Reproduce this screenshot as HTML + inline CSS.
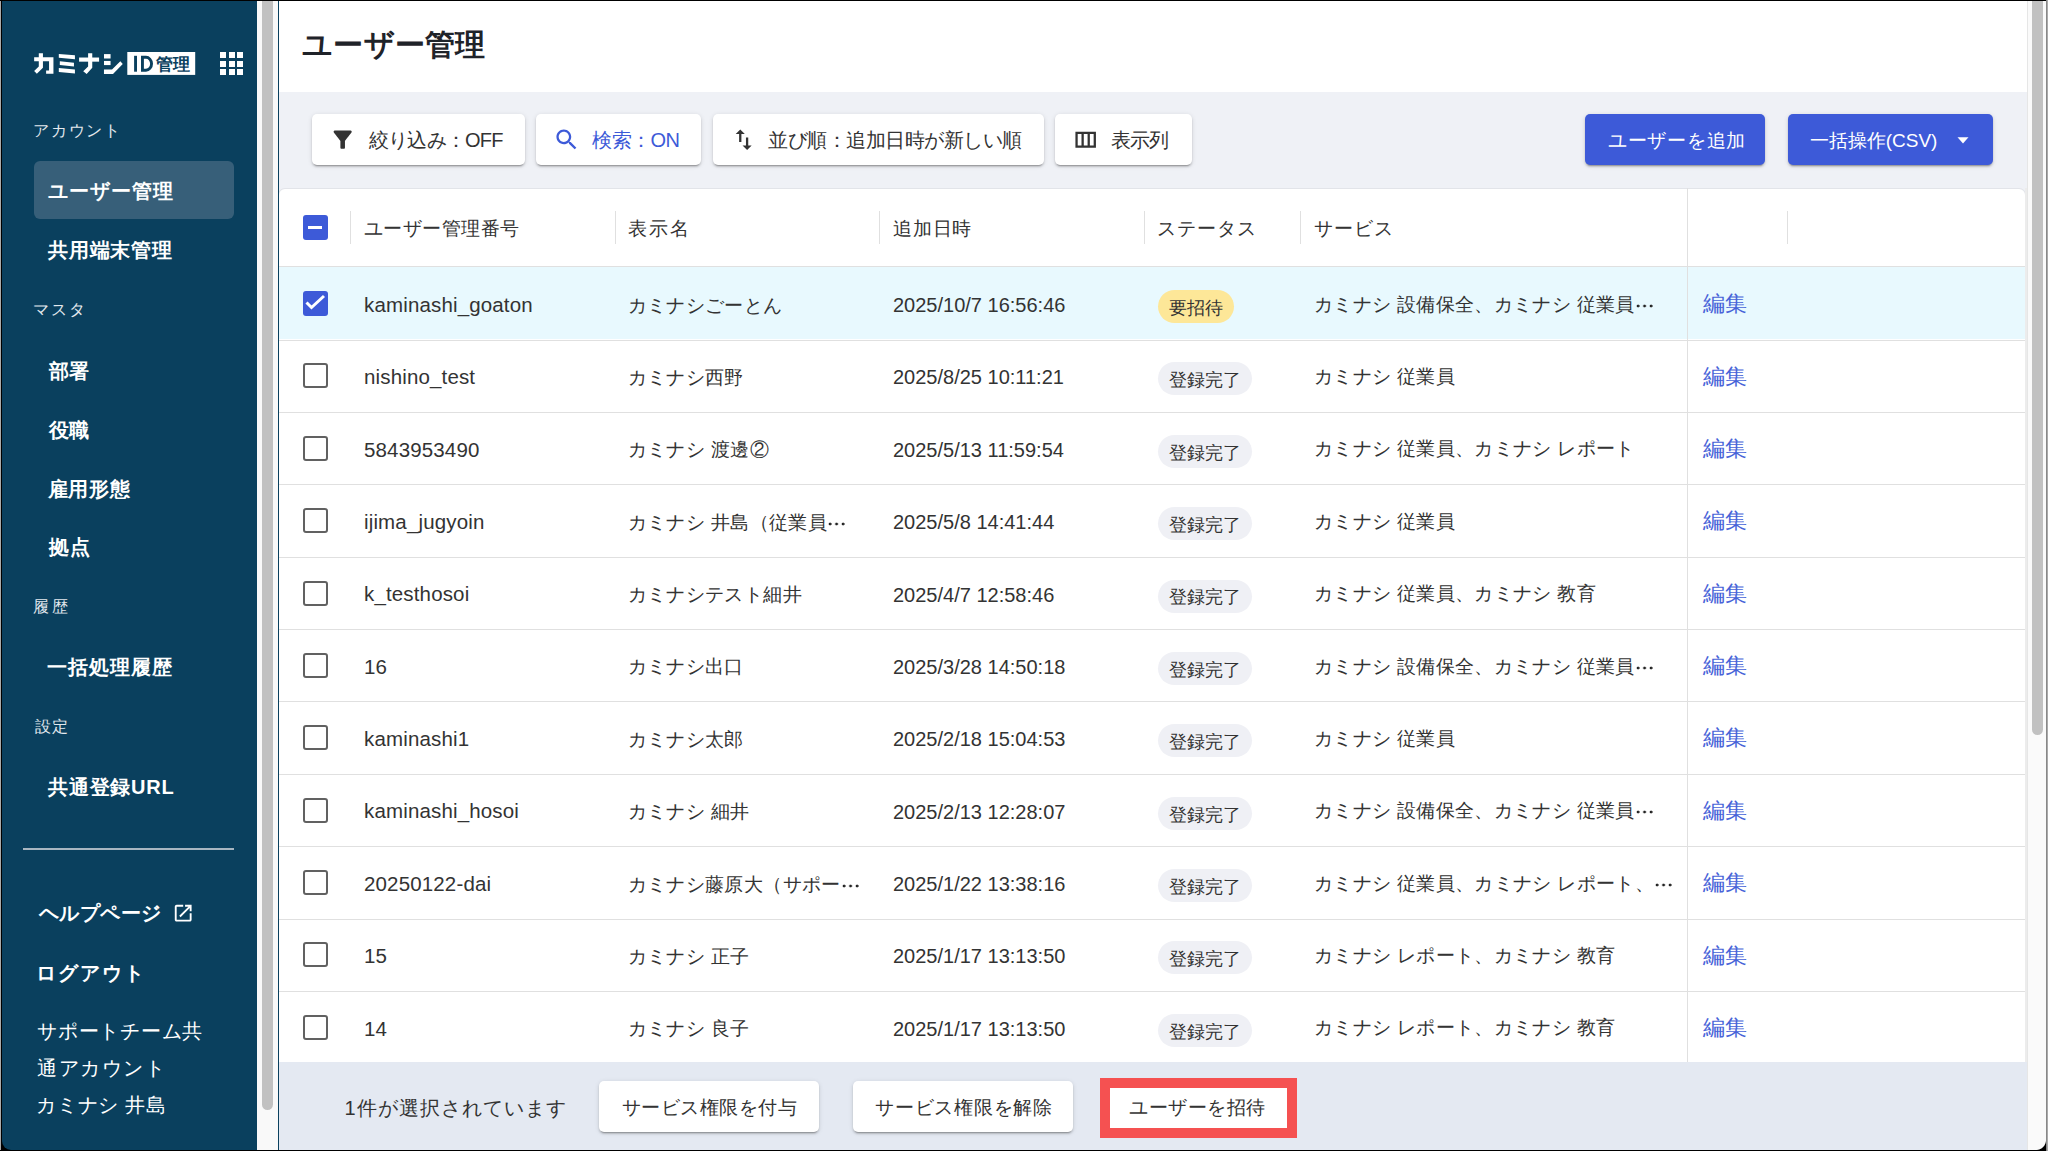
<!DOCTYPE html>
<html lang="ja"><head><meta charset="utf-8"><title>ユーザー管理</title>
<style>
html,body{margin:0;padding:0;width:2048px;height:1151px;overflow:hidden;background:#000}
body{position:relative;font-family:'Liberation Sans', sans-serif}
.t{position:absolute;white-space:nowrap}
</style></head><body>
<div id="side" style="position:absolute;left:2px;top:1px;width:255px;height:1149px;background:#0a405e;border-bottom-left-radius:9px"></div>
<svg style="position:absolute;left:0;top:0" width="260" height="90" viewBox="0 0 260 90"><g fill="#fff"><path d="M34.15 57.28H53.44V73.63H46.11V70.46H49.04V61.18H34.15Z"/><path d="M38.79 53.13H42.94V67.78L36.84 73.63L34.15 70.95L38.79 66.55Z"/><path d="M58.81 54.10L74.92 55.32V59.23L58.81 57.77Z"/><path d="M59.79 61.18L73.95 62.65V66.55L59.79 65.09Z"/><path d="M58.81 68.02L74.92 69.48V73.39L58.81 71.93Z"/><path d="M79.07 57.52H99.09V61.67H79.07Z"/><path d="M88.11 53.13H92.26V67.78L86.64 73.88L83.22 71.19L88.11 66.55Z"/><path d="M103.97 54.10H110.57V58.50H103.97Z"/><path d="M103.97 60.94H110.57V65.09H103.97Z"/><path d="M103.97 69.48H112.03L120.33 61.18L122.77 64.11L113.01 73.88H103.97Z"/><rect x="127.3" y="52" width="67.9" height="22.9"/></g><g fill="#0a405e"><rect x="134.1" y="55.8" width="2.9" height="15.9"/><path fill-rule="evenodd" d="M141 55.8H146A7 7.95 0 0 1 146 71.7H141Z M143.9 58.7H146A4.1 5.05 0 0 1 146 68.8H143.9Z"/></g></svg>
<div class="t" style="left:156px;top:56.70px;font-size:16.6px;line-height:16.6px;font-weight:700;color:#0a405e;">管理</div>
<div style="position:absolute;left:220.0px;top:52.0px;width:6px;height:6px;background:#fff"></div>
<div style="position:absolute;left:228.6px;top:52.0px;width:6px;height:6px;background:#fff"></div>
<div style="position:absolute;left:237.2px;top:52.0px;width:6px;height:6px;background:#fff"></div>
<div style="position:absolute;left:220.0px;top:60.6px;width:6px;height:6px;background:#fff"></div>
<div style="position:absolute;left:228.6px;top:60.6px;width:6px;height:6px;background:#fff"></div>
<div style="position:absolute;left:237.2px;top:60.6px;width:6px;height:6px;background:#fff"></div>
<div style="position:absolute;left:220.0px;top:69.2px;width:6px;height:6px;background:#fff"></div>
<div style="position:absolute;left:228.6px;top:69.2px;width:6px;height:6px;background:#fff"></div>
<div style="position:absolute;left:237.2px;top:69.2px;width:6px;height:6px;background:#fff"></div>
<div style="position:absolute;left:34px;top:161px;width:200px;height:58px;border-radius:6px;background:#375f79"></div>
<div class="t" style="left:33.00px;top:123.00px;font-size:16px;letter-spacing:1.75px;line-height:16px;font-weight:400;color:#e3e9ee;">アカウント</div>
<div class="t" style="left:33.30px;top:302.00px;font-size:16px;letter-spacing:1.75px;line-height:16px;font-weight:400;color:#e3e9ee;">マスタ</div>
<div class="t" style="left:33.00px;top:598.50px;font-size:16px;letter-spacing:2.75px;line-height:16px;font-weight:400;color:#e3e9ee;">履歴</div>
<div class="t" style="left:34.50px;top:718.50px;font-size:16px;letter-spacing:1.0px;line-height:16px;font-weight:400;color:#e3e9ee;">設定</div>
<div class="t" style="left:48.00px;top:181.00px;font-size:20px;letter-spacing:1.0px;line-height:20px;font-weight:700;color:#fff;">ユーザー管理</div>
<div class="t" style="left:48.00px;top:240.00px;font-size:20px;letter-spacing:0.75px;line-height:20px;font-weight:700;color:#fff;">共用端末管理</div>
<div class="t" style="left:48.60px;top:361.00px;font-size:20px;letter-spacing:0.0px;line-height:20px;font-weight:700;color:#fff;">部署</div>
<div class="t" style="left:48.60px;top:419.50px;font-size:20px;letter-spacing:0.0px;line-height:20px;font-weight:700;color:#fff;">役職</div>
<div class="t" style="left:47.60px;top:479.00px;font-size:20px;letter-spacing:0.75px;line-height:20px;font-weight:700;color:#fff;">雇用形態</div>
<div class="t" style="left:48.60px;top:537.00px;font-size:20px;letter-spacing:1.0px;line-height:20px;font-weight:700;color:#fff;">拠点</div>
<div class="t" style="left:47.30px;top:656.70px;font-size:20px;letter-spacing:1.0px;line-height:20px;font-weight:700;color:#fff;">一括処理履歴</div>
<div class="t" style="left:48.00px;top:777.00px;font-size:20px;letter-spacing:0.75px;line-height:20px;font-weight:700;color:#fff;">共通登録URL</div>
<div style="position:absolute;left:23px;top:848px;width:211px;height:2px;background:#a8b6c1"></div>
<div class="t" style="left:38.50px;top:903.00px;font-size:20px;letter-spacing:0.5px;line-height:20px;font-weight:700;color:#fff;">ヘルプページ</div>
<svg style="position:absolute;left:172.4px;top:901.8px" width="22.4" height="22.4" viewBox="0 0 24 24"><path fill="#fff" d="M19 19H5V5h7V3H5c-1.11 0-2 .9-2 2v14c0 1.1.89 2 2 2h14c1.1 0 2-.9 2-2v-7h-2v7zM14 3v2h3.59l-9.83 9.83 1.41 1.41L19 6.41V10h2V3h-7z"/></svg>
<div class="t" style="left:35.50px;top:963.00px;font-size:20px;letter-spacing:2.0px;line-height:20px;font-weight:700;color:#fff;">ログアウト</div>
<div class="t" style="left:37.00px;top:1021.30px;font-size:20px;letter-spacing:0.75px;line-height:20px;font-weight:400;color:#fff;">サポートチーム共</div>
<div class="t" style="left:37.00px;top:1058.00px;font-size:20px;letter-spacing:1.5px;line-height:20px;font-weight:400;color:#fff;">通アカウント</div>
<div class="t" style="left:36.00px;top:1095.00px;font-size:20px;letter-spacing:0.75px;line-height:20px;font-weight:400;color:#fff;">カミナシ 井島</div>
<div style="position:absolute;left:257px;top:1px;width:21px;height:1149px;background:#f9f9f9"></div>
<div style="position:absolute;left:262px;top:-5px;width:11px;height:1115px;background:#c1c1c1;border-radius:6px"></div>
<div style="position:absolute;left:279px;top:1px;width:1748px;height:91px;background:#fff"></div>
<div style="position:absolute;left:279px;top:92px;width:1748px;height:1058px;background:#eff1f6"></div>
<div class="t" style="left:302.00px;top:30.00px;font-size:30px;letter-spacing:0.25px;line-height:30px;font-weight:700;color:#1f2329;">ユーザー管理</div>
<div style="position:absolute;left:312px;top:114px;width:213px;height:51px;background:#fff;border-radius:5px;box-shadow:0 3px 1px -2px rgba(0,0,0,0.2),0 2px 2px 0 rgba(0,0,0,0.14),0 1px 5px 0 rgba(0,0,0,0.12);"></div>
<div style="position:absolute;left:536px;top:114px;width:165px;height:51px;background:#fff;border-radius:5px;box-shadow:0 3px 1px -2px rgba(0,0,0,0.2),0 2px 2px 0 rgba(0,0,0,0.14),0 1px 5px 0 rgba(0,0,0,0.12);"></div>
<div style="position:absolute;left:713px;top:114px;width:331px;height:51px;background:#fff;border-radius:5px;box-shadow:0 3px 1px -2px rgba(0,0,0,0.2),0 2px 2px 0 rgba(0,0,0,0.14),0 1px 5px 0 rgba(0,0,0,0.12);"></div>
<div style="position:absolute;left:1055px;top:114px;width:137px;height:51px;background:#fff;border-radius:5px;box-shadow:0 3px 1px -2px rgba(0,0,0,0.2),0 2px 2px 0 rgba(0,0,0,0.14),0 1px 5px 0 rgba(0,0,0,0.12);"></div>
<div style="position:absolute;left:1585px;top:114px;width:180px;height:51px;background:#3d5ad8;border-radius:5px;box-shadow:0 3px 1px -2px rgba(0,0,0,0.2),0 2px 2px 0 rgba(0,0,0,0.14),0 1px 5px 0 rgba(0,0,0,0.12);"></div>
<div style="position:absolute;left:1788px;top:114px;width:205px;height:51px;background:#3d5ad8;border-radius:5px;box-shadow:0 3px 1px -2px rgba(0,0,0,0.2),0 2px 2px 0 rgba(0,0,0,0.14),0 1px 5px 0 rgba(0,0,0,0.12);"></div>
<svg style="position:absolute;left:329.4px;top:126.2px" width="27.36" height="27.36" viewBox="0 0 24 24"><path fill="#333" d="M4.25 5.61C6.27 8.2 10 13 10 13v6c0 .55.45 1 1 1h2c.55 0 1-.45 1-1v-6s3.72-4.8 5.74-7.39c.51-.66.04-1.61-.79-1.61H5.04c-.83 0-1.3.95-.79 1.61z"/></svg>
<svg style="position:absolute;left:552.6px;top:126.2px" width="27.36" height="27.36" viewBox="0 0 24 24"><path fill="#3d5ad8" d="M15.5 14h-.79l-.28-.27C15.41 12.59 16 11.11 16 9.5 16 5.91 13.09 3 9.5 3S3 5.91 3 9.5 5.91 16 9.5 16c1.61 0 3.09-.59 4.23-1.57l.27.28v.79l5 4.99L20.49 19l-4.99-5zm-6 0C7.01 14 5 11.99 5 9.5S7.01 5 9.5 5 14 7.01 14 9.5 11.99 14 9.5 14z"/></svg>
<svg style="position:absolute;left:730px;top:126.2px" width="27.36" height="27.36" viewBox="0 0 24 24"><path fill="#333" d="M16 17.01V10h-2v7.01h-3L15 21l4-3.99h-3zM9 3L5 6.99h3V14h2V6.99h3L9 3z"/></svg>
<svg style="position:absolute;left:1072.3px;top:126.2px" width="27.36" height="27.36" viewBox="0 0 24 24"><path fill="#333" d="M3 5v14h18V5H3zm5.33 12H5V7h3.33v10zm5.34 0h-3.33V7h3.33v10zM19 17h-3.33V7H19v10z"/></svg>
<div class="t" style="left:368.80px;top:130.30px;font-size:20px;letter-spacing:-0.75px;line-height:20px;font-weight:400;color:#333;">絞り込み：OFF</div>
<div class="t" style="left:592.00px;top:130.30px;font-size:20px;letter-spacing:-0.5px;line-height:20px;font-weight:400;color:#3d5ad8;">検索：ON</div>
<div class="t" style="left:768.00px;top:130.30px;font-size:20px;letter-spacing:-0.5px;line-height:20px;font-weight:400;color:#333;">並び順：追加日時が新しい順</div>
<div class="t" style="left:1110.70px;top:130.30px;font-size:20px;letter-spacing:-0.75px;line-height:20px;font-weight:400;color:#333;">表示列</div>
<div class="t" style="left:1607.80px;top:131.30px;font-size:19px;letter-spacing:0.75px;line-height:19px;font-weight:400;color:#fff;">ユーザーを追加</div>
<div class="t" style="left:1809.70px;top:131.30px;font-size:19px;letter-spacing:0.0px;line-height:19px;font-weight:400;color:#fff;">一括操作(CSV)</div>
<svg style="position:absolute;left:1956.5px;top:137.3px" width="12" height="7" viewBox="0 0 12 7"><path fill="#fff" d="M0.5 0.3H11.5L6 6.6z"/></svg>
<div style="position:absolute;left:279px;top:189px;width:1746px;height:873px;background:#fff;border-radius:6px 6px 0 0;box-shadow:0 0 0 1px #e2e4e9"></div>
<div style="position:absolute;left:279px;top:266px;width:1746px;height:1px;background:#e0e0e0"></div>
<div style="position:absolute;left:350px;top:210.5px;width:1px;height:33px;background:#e0e0e0"></div>
<div style="position:absolute;left:614.5px;top:210.5px;width:1px;height:33px;background:#e0e0e0"></div>
<div style="position:absolute;left:879px;top:210.5px;width:1px;height:33px;background:#e0e0e0"></div>
<div style="position:absolute;left:1144px;top:210.5px;width:1px;height:33px;background:#e0e0e0"></div>
<div style="position:absolute;left:1299.5px;top:210.5px;width:1px;height:33px;background:#e0e0e0"></div>
<div style="position:absolute;left:1787px;top:210.5px;width:1px;height:33px;background:#e0e0e0"></div>
<div class="t" style="left:363.50px;top:219.00px;font-size:19px;letter-spacing:0.5px;line-height:19px;font-weight:400;color:#333;">ユーザー管理番号</div>
<div class="t" style="left:628.00px;top:219.00px;font-size:19px;letter-spacing:1.75px;line-height:19px;font-weight:400;color:#333;">表示名</div>
<div class="t" style="left:893.00px;top:219.00px;font-size:19px;letter-spacing:0.75px;line-height:19px;font-weight:400;color:#333;">追加日時</div>
<div class="t" style="left:1157.30px;top:219.00px;font-size:19px;letter-spacing:1.0px;line-height:19px;font-weight:400;color:#333;">ステータス</div>
<div class="t" style="left:1313.70px;top:219.00px;font-size:19px;letter-spacing:1.25px;line-height:19px;font-weight:400;color:#333;">サービス</div>
<div style="position:absolute;left:302.8px;top:214.6px;width:25px;height:25px;background:#3d5ad8;border-radius:3px"></div>
<div style="position:absolute;left:308px;top:225.5px;width:14px;height:3px;background:#fff"></div>
<div style="position:absolute;left:279px;top:267px;width:1746px;height:72px;background:#e8f9fe"></div>
<div style="position:absolute;left:279px;top:340px;width:1746px;height:1px;background:#e0e0e0"></div>
<div style="position:absolute;left:302.8px;top:291.00px;width:25px;height:25px;background:#3d5ad8;border-radius:3px"></div>
<svg style="position:absolute;left:302.8px;top:291.00px" width="25" height="25" viewBox="0 0 25 25"><path fill="none" stroke="#fff" stroke-width="3" d="M3.5 11.5l5 5L21 5"/></svg>
<div class="t" style="left:364px;top:294.85px;font-size:20.5px;line-height:20.5px;font-weight:400;color:#333;letter-spacing:0.15px">kaminashi_goaton</div>
<div class="t" style="left:627.5px;top:295.60px;font-size:19px;line-height:19px;font-weight:400;color:#333;letter-spacing:0.4px">カミナシごーとん</div>
<div class="t" style="left:893px;top:295.10px;font-size:20px;line-height:20px;font-weight:400;color:#333;">2025/10/7 16:56:46</div>
<div style="position:absolute;left:1158px;top:290.00px;width:76px;height:33px;border-radius:17px;background:#fde798"></div>
<div class="t" style="left:1168.5px;top:299.95px;font-size:17.7px;line-height:17.7px;font-weight:400;color:#333;">要招待</div>
<div class="t" style="left:1314px;top:295.65px;font-size:18.9px;line-height:18.9px;font-weight:400;color:#333;letter-spacing:0.35px">カミナシ 設備保全、カミナシ 従業員<span style="display:inline-block;width:19px;height:4px;vertical-align:middle;margin-left:1px;background:radial-gradient(circle at 2px 2px,#222 1.2px,transparent 1.7px) 0 0/6.5px 4px repeat-x"></span></div>
<div class="t" style="left:1703px;top:294.15px;font-size:21.5px;line-height:21.5px;font-weight:400;color:#4763d8;">編集</div>
<div style="position:absolute;left:279px;top:412px;width:1746px;height:1px;background:#e0e0e0"></div>
<div style="position:absolute;left:302.8px;top:363.38px;width:25px;height:25px;box-sizing:border-box;border:2.3px solid #616161;border-radius:3px"></div>
<div class="t" style="left:364px;top:367.23px;font-size:20.5px;line-height:20.5px;font-weight:400;color:#333;letter-spacing:0.15px">nishino_test</div>
<div class="t" style="left:627.5px;top:367.98px;font-size:19px;line-height:19px;font-weight:400;color:#333;letter-spacing:0.4px">カミナシ西野</div>
<div class="t" style="left:893px;top:367.48px;font-size:20px;line-height:20px;font-weight:400;color:#333;">2025/8/25 10:11:21</div>
<div style="position:absolute;left:1158px;top:362.38px;width:94px;height:33px;border-radius:17px;background:#eff0f5"></div>
<div class="t" style="left:1168.5px;top:372.32px;font-size:17.7px;line-height:17.7px;font-weight:400;color:#333;">登録完了</div>
<div class="t" style="left:1314px;top:368.03px;font-size:18.9px;line-height:18.9px;font-weight:400;color:#333;letter-spacing:0.35px">カミナシ 従業員</div>
<div class="t" style="left:1703px;top:366.52px;font-size:21.5px;line-height:21.5px;font-weight:400;color:#4763d8;">編集</div>
<div style="position:absolute;left:279px;top:484px;width:1746px;height:1px;background:#e0e0e0"></div>
<div style="position:absolute;left:302.8px;top:435.75px;width:25px;height:25px;box-sizing:border-box;border:2.3px solid #616161;border-radius:3px"></div>
<div class="t" style="left:364px;top:439.60px;font-size:20.5px;line-height:20.5px;font-weight:400;color:#333;letter-spacing:0.15px">5843953490</div>
<div class="t" style="left:627.5px;top:440.35px;font-size:19px;line-height:19px;font-weight:400;color:#333;letter-spacing:0.4px">カミナシ 渡邊②</div>
<div class="t" style="left:893px;top:439.85px;font-size:20px;line-height:20px;font-weight:400;color:#333;">2025/5/13 11:59:54</div>
<div style="position:absolute;left:1158px;top:434.75px;width:94px;height:33px;border-radius:17px;background:#eff0f5"></div>
<div class="t" style="left:1168.5px;top:444.70px;font-size:17.7px;line-height:17.7px;font-weight:400;color:#333;">登録完了</div>
<div class="t" style="left:1314px;top:440.40px;font-size:18.9px;line-height:18.9px;font-weight:400;color:#333;letter-spacing:0.35px">カミナシ 従業員、カミナシ レポート</div>
<div class="t" style="left:1703px;top:438.90px;font-size:21.5px;line-height:21.5px;font-weight:400;color:#4763d8;">編集</div>
<div style="position:absolute;left:279px;top:557px;width:1746px;height:1px;background:#e0e0e0"></div>
<div style="position:absolute;left:302.8px;top:508.12px;width:25px;height:25px;box-sizing:border-box;border:2.3px solid #616161;border-radius:3px"></div>
<div class="t" style="left:364px;top:511.98px;font-size:20.5px;line-height:20.5px;font-weight:400;color:#333;letter-spacing:0.15px">ijima_jugyoin</div>
<div class="t" style="left:627.5px;top:512.73px;font-size:19px;line-height:19px;font-weight:400;color:#333;letter-spacing:0.4px">カミナシ 井島（従業員<span style="display:inline-block;width:19px;height:4px;vertical-align:middle;margin-left:1px;background:radial-gradient(circle at 2px 2px,#222 1.2px,transparent 1.7px) 0 0/6.5px 4px repeat-x"></span></div>
<div class="t" style="left:893px;top:512.23px;font-size:20px;line-height:20px;font-weight:400;color:#333;">2025/5/8 14:41:44</div>
<div style="position:absolute;left:1158px;top:507.12px;width:94px;height:33px;border-radius:17px;background:#eff0f5"></div>
<div class="t" style="left:1168.5px;top:517.07px;font-size:17.7px;line-height:17.7px;font-weight:400;color:#333;">登録完了</div>
<div class="t" style="left:1314px;top:512.77px;font-size:18.9px;line-height:18.9px;font-weight:400;color:#333;letter-spacing:0.35px">カミナシ 従業員</div>
<div class="t" style="left:1703px;top:511.27px;font-size:21.5px;line-height:21.5px;font-weight:400;color:#4763d8;">編集</div>
<div style="position:absolute;left:279px;top:629px;width:1746px;height:1px;background:#e0e0e0"></div>
<div style="position:absolute;left:302.8px;top:580.50px;width:25px;height:25px;box-sizing:border-box;border:2.3px solid #616161;border-radius:3px"></div>
<div class="t" style="left:364px;top:584.35px;font-size:20.5px;line-height:20.5px;font-weight:400;color:#333;letter-spacing:0.15px">k_testhosoi</div>
<div class="t" style="left:627.5px;top:585.10px;font-size:19px;line-height:19px;font-weight:400;color:#333;letter-spacing:0.4px">カミナシテスト細井</div>
<div class="t" style="left:893px;top:584.60px;font-size:20px;line-height:20px;font-weight:400;color:#333;">2025/4/7 12:58:46</div>
<div style="position:absolute;left:1158px;top:579.50px;width:94px;height:33px;border-radius:17px;background:#eff0f5"></div>
<div class="t" style="left:1168.5px;top:589.45px;font-size:17.7px;line-height:17.7px;font-weight:400;color:#333;">登録完了</div>
<div class="t" style="left:1314px;top:585.15px;font-size:18.9px;line-height:18.9px;font-weight:400;color:#333;letter-spacing:0.35px">カミナシ 従業員、カミナシ 教育</div>
<div class="t" style="left:1703px;top:583.65px;font-size:21.5px;line-height:21.5px;font-weight:400;color:#4763d8;">編集</div>
<div style="position:absolute;left:279px;top:701px;width:1746px;height:1px;background:#e0e0e0"></div>
<div style="position:absolute;left:302.8px;top:652.88px;width:25px;height:25px;box-sizing:border-box;border:2.3px solid #616161;border-radius:3px"></div>
<div class="t" style="left:364px;top:656.73px;font-size:20.5px;line-height:20.5px;font-weight:400;color:#333;letter-spacing:0.15px">16</div>
<div class="t" style="left:627.5px;top:657.48px;font-size:19px;line-height:19px;font-weight:400;color:#333;letter-spacing:0.4px">カミナシ出口</div>
<div class="t" style="left:893px;top:656.98px;font-size:20px;line-height:20px;font-weight:400;color:#333;">2025/3/28 14:50:18</div>
<div style="position:absolute;left:1158px;top:651.88px;width:94px;height:33px;border-radius:17px;background:#eff0f5"></div>
<div class="t" style="left:1168.5px;top:661.82px;font-size:17.7px;line-height:17.7px;font-weight:400;color:#333;">登録完了</div>
<div class="t" style="left:1314px;top:657.52px;font-size:18.9px;line-height:18.9px;font-weight:400;color:#333;letter-spacing:0.35px">カミナシ 設備保全、カミナシ 従業員<span style="display:inline-block;width:19px;height:4px;vertical-align:middle;margin-left:1px;background:radial-gradient(circle at 2px 2px,#222 1.2px,transparent 1.7px) 0 0/6.5px 4px repeat-x"></span></div>
<div class="t" style="left:1703px;top:656.02px;font-size:21.5px;line-height:21.5px;font-weight:400;color:#4763d8;">編集</div>
<div style="position:absolute;left:279px;top:774px;width:1746px;height:1px;background:#e0e0e0"></div>
<div style="position:absolute;left:302.8px;top:725.25px;width:25px;height:25px;box-sizing:border-box;border:2.3px solid #616161;border-radius:3px"></div>
<div class="t" style="left:364px;top:729.10px;font-size:20.5px;line-height:20.5px;font-weight:400;color:#333;letter-spacing:0.15px">kaminashi1</div>
<div class="t" style="left:627.5px;top:729.85px;font-size:19px;line-height:19px;font-weight:400;color:#333;letter-spacing:0.4px">カミナシ太郎</div>
<div class="t" style="left:893px;top:729.35px;font-size:20px;line-height:20px;font-weight:400;color:#333;">2025/2/18 15:04:53</div>
<div style="position:absolute;left:1158px;top:724.25px;width:94px;height:33px;border-radius:17px;background:#eff0f5"></div>
<div class="t" style="left:1168.5px;top:734.20px;font-size:17.7px;line-height:17.7px;font-weight:400;color:#333;">登録完了</div>
<div class="t" style="left:1314px;top:729.90px;font-size:18.9px;line-height:18.9px;font-weight:400;color:#333;letter-spacing:0.35px">カミナシ 従業員</div>
<div class="t" style="left:1703px;top:728.40px;font-size:21.5px;line-height:21.5px;font-weight:400;color:#4763d8;">編集</div>
<div style="position:absolute;left:279px;top:846px;width:1746px;height:1px;background:#e0e0e0"></div>
<div style="position:absolute;left:302.8px;top:797.62px;width:25px;height:25px;box-sizing:border-box;border:2.3px solid #616161;border-radius:3px"></div>
<div class="t" style="left:364px;top:801.48px;font-size:20.5px;line-height:20.5px;font-weight:400;color:#333;letter-spacing:0.15px">kaminashi_hosoi</div>
<div class="t" style="left:627.5px;top:802.23px;font-size:19px;line-height:19px;font-weight:400;color:#333;letter-spacing:0.4px">カミナシ 細井</div>
<div class="t" style="left:893px;top:801.73px;font-size:20px;line-height:20px;font-weight:400;color:#333;">2025/2/13 12:28:07</div>
<div style="position:absolute;left:1158px;top:796.62px;width:94px;height:33px;border-radius:17px;background:#eff0f5"></div>
<div class="t" style="left:1168.5px;top:806.57px;font-size:17.7px;line-height:17.7px;font-weight:400;color:#333;">登録完了</div>
<div class="t" style="left:1314px;top:802.27px;font-size:18.9px;line-height:18.9px;font-weight:400;color:#333;letter-spacing:0.35px">カミナシ 設備保全、カミナシ 従業員<span style="display:inline-block;width:19px;height:4px;vertical-align:middle;margin-left:1px;background:radial-gradient(circle at 2px 2px,#222 1.2px,transparent 1.7px) 0 0/6.5px 4px repeat-x"></span></div>
<div class="t" style="left:1703px;top:800.77px;font-size:21.5px;line-height:21.5px;font-weight:400;color:#4763d8;">編集</div>
<div style="position:absolute;left:279px;top:919px;width:1746px;height:1px;background:#e0e0e0"></div>
<div style="position:absolute;left:302.8px;top:870.00px;width:25px;height:25px;box-sizing:border-box;border:2.3px solid #616161;border-radius:3px"></div>
<div class="t" style="left:364px;top:873.85px;font-size:20.5px;line-height:20.5px;font-weight:400;color:#333;letter-spacing:0.15px">20250122-dai</div>
<div class="t" style="left:627.5px;top:874.60px;font-size:19px;line-height:19px;font-weight:400;color:#333;letter-spacing:0.4px">カミナシ藤原大（サポー<span style="display:inline-block;width:19px;height:4px;vertical-align:middle;margin-left:1px;background:radial-gradient(circle at 2px 2px,#222 1.2px,transparent 1.7px) 0 0/6.5px 4px repeat-x"></span></div>
<div class="t" style="left:893px;top:874.10px;font-size:20px;line-height:20px;font-weight:400;color:#333;">2025/1/22 13:38:16</div>
<div style="position:absolute;left:1158px;top:869.00px;width:94px;height:33px;border-radius:17px;background:#eff0f5"></div>
<div class="t" style="left:1168.5px;top:878.95px;font-size:17.7px;line-height:17.7px;font-weight:400;color:#333;">登録完了</div>
<div class="t" style="left:1314px;top:874.65px;font-size:18.9px;line-height:18.9px;font-weight:400;color:#333;letter-spacing:0.35px">カミナシ 従業員、カミナシ レポート、<span style="display:inline-block;width:19px;height:4px;vertical-align:middle;margin-left:1px;background:radial-gradient(circle at 2px 2px,#222 1.2px,transparent 1.7px) 0 0/6.5px 4px repeat-x"></span></div>
<div class="t" style="left:1703px;top:873.15px;font-size:21.5px;line-height:21.5px;font-weight:400;color:#4763d8;">編集</div>
<div style="position:absolute;left:279px;top:991px;width:1746px;height:1px;background:#e0e0e0"></div>
<div style="position:absolute;left:302.8px;top:942.38px;width:25px;height:25px;box-sizing:border-box;border:2.3px solid #616161;border-radius:3px"></div>
<div class="t" style="left:364px;top:946.23px;font-size:20.5px;line-height:20.5px;font-weight:400;color:#333;letter-spacing:0.15px">15</div>
<div class="t" style="left:627.5px;top:946.98px;font-size:19px;line-height:19px;font-weight:400;color:#333;letter-spacing:0.4px">カミナシ 正子</div>
<div class="t" style="left:893px;top:946.48px;font-size:20px;line-height:20px;font-weight:400;color:#333;">2025/1/17 13:13:50</div>
<div style="position:absolute;left:1158px;top:941.38px;width:94px;height:33px;border-radius:17px;background:#eff0f5"></div>
<div class="t" style="left:1168.5px;top:951.32px;font-size:17.7px;line-height:17.7px;font-weight:400;color:#333;">登録完了</div>
<div class="t" style="left:1314px;top:947.02px;font-size:18.9px;line-height:18.9px;font-weight:400;color:#333;letter-spacing:0.35px">カミナシ レポート、カミナシ 教育</div>
<div class="t" style="left:1703px;top:945.52px;font-size:21.5px;line-height:21.5px;font-weight:400;color:#4763d8;">編集</div>
<div style="position:absolute;left:302.8px;top:1014.75px;width:25px;height:25px;box-sizing:border-box;border:2.3px solid #616161;border-radius:3px"></div>
<div class="t" style="left:364px;top:1018.60px;font-size:20.5px;line-height:20.5px;font-weight:400;color:#333;letter-spacing:0.15px">14</div>
<div class="t" style="left:627.5px;top:1019.35px;font-size:19px;line-height:19px;font-weight:400;color:#333;letter-spacing:0.4px">カミナシ 良子</div>
<div class="t" style="left:893px;top:1018.85px;font-size:20px;line-height:20px;font-weight:400;color:#333;">2025/1/17 13:13:50</div>
<div style="position:absolute;left:1158px;top:1013.75px;width:94px;height:33px;border-radius:17px;background:#eff0f5"></div>
<div class="t" style="left:1168.5px;top:1023.70px;font-size:17.7px;line-height:17.7px;font-weight:400;color:#333;">登録完了</div>
<div class="t" style="left:1314px;top:1019.40px;font-size:18.9px;line-height:18.9px;font-weight:400;color:#333;letter-spacing:0.35px">カミナシ レポート、カミナシ 教育</div>
<div class="t" style="left:1703px;top:1017.90px;font-size:21.5px;line-height:21.5px;font-weight:400;color:#4763d8;">編集</div>
<div style="position:absolute;left:1687px;top:188px;width:1px;height:874px;background:#e0e0e0"></div>
<div style="position:absolute;left:279px;top:1062px;width:1748px;height:88px;background:#e4e9f2"></div>
<div class="t" style="left:344.50px;top:1098.20px;font-size:20px;letter-spacing:1.0px;line-height:20px;font-weight:400;color:#333;">1件が選択されています</div>
<div style="position:absolute;left:599px;top:1081px;width:220px;height:51px;background:#fff;border-radius:5px;box-shadow:0 3px 1px -2px rgba(0,0,0,0.2),0 2px 2px 0 rgba(0,0,0,0.14),0 1px 5px 0 rgba(0,0,0,0.12);"></div>
<div style="position:absolute;left:853px;top:1081px;width:220px;height:51px;background:#fff;border-radius:5px;box-shadow:0 3px 1px -2px rgba(0,0,0,0.2),0 2px 2px 0 rgba(0,0,0,0.14),0 1px 5px 0 rgba(0,0,0,0.12);"></div>
<div style="position:absolute;left:1099.5px;top:1078.3px;width:197px;height:60px;box-sizing:border-box;border:10px solid #f55151;background:#fff"></div>
<div class="t" style="left:621.80px;top:1098.30px;font-size:19px;letter-spacing:0.5px;line-height:19px;font-weight:400;color:#333;">サービス権限を付与</div>
<div class="t" style="left:875.00px;top:1098.30px;font-size:19px;letter-spacing:0.75px;line-height:19px;font-weight:400;color:#333;">サービス権限を解除</div>
<div class="t" style="left:1129.00px;top:1098.30px;font-size:19px;letter-spacing:0.5px;line-height:19px;font-weight:400;color:#333;">ユーザーを招待</div>
<div style="position:absolute;left:2025px;top:188px;width:2px;height:874px;background:#ececec"></div>
<div style="position:absolute;left:2027px;top:1px;width:19px;height:1149px;background:#fafafa;border-left:1px solid #e6e6e6;box-sizing:border-box"></div>
<div style="position:absolute;left:2032px;top:-5px;width:11px;height:740px;background:#c1c1c1;border-radius:6px"></div>
<div style="position:absolute;left:0;top:0;width:1px;height:1151px;background:#aaa"></div>
<div style="position:absolute;left:1px;top:0;width:1px;height:1151px;background:#000"></div>
<div style="position:absolute;left:0;top:0;width:2048px;height:1px;background:#000"></div>
<div style="position:absolute;left:0;top:1150px;width:2048px;height:1px;background:#000"></div>
<div style="position:absolute;left:278px;top:1px;width:1px;height:1149px;background:#0a405e"></div>
<div style="position:absolute;left:2046px;top:0;width:1px;height:1151px;background:#888"></div>
<div style="position:absolute;left:2047px;top:0;width:1px;height:1151px;background:#aaa"></div>
<div style="position:absolute;left:2036px;top:1140px;width:10px;height:10px;background:radial-gradient(circle at 0 0,transparent 9.5px,#000 10.5px)"></div>
</body></html>
